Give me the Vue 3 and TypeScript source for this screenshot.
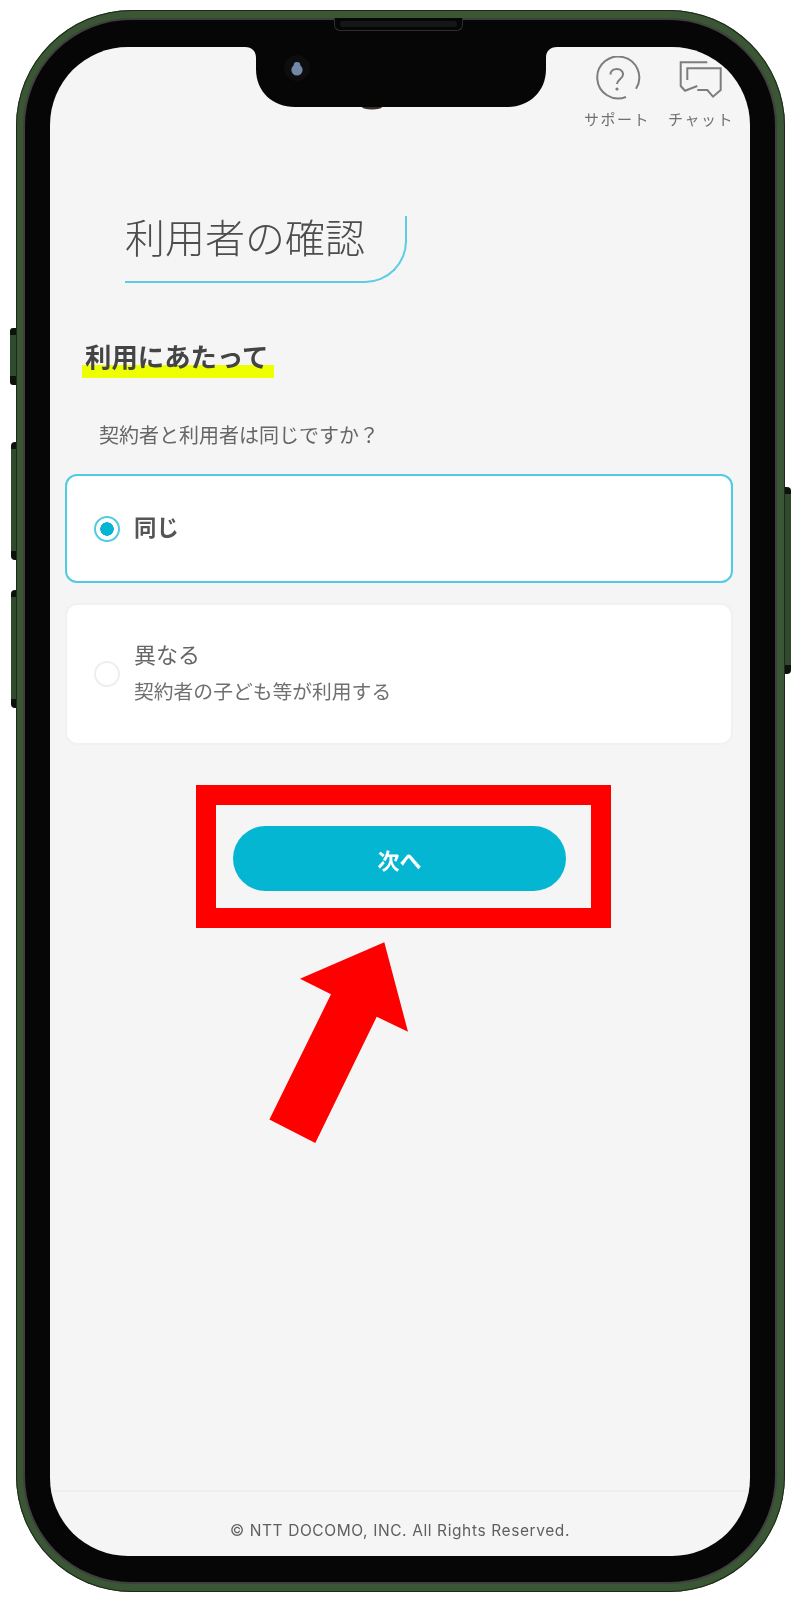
<script setup lang="ts">
const cjk = '"Noto Sans CJK JP", "Noto Sans", sans-serif'
const fontVars = { '--cjk': cjk }
</script>

<template>
  <div class="page" :style="fontVars">
    <div class="phone">
      <span class="key key-a"></span>
      <span class="key key-b"></span>
      <span class="key key-c"></span>
      <span class="key key-d"></span>
      <div class="bezel">
        <div class="speaker"><span class="grille"></span></div>
        <div class="screen">
          <svg class="notch" viewBox="0 0 312 63" width="312" height="63" aria-hidden="true">
            <ellipse cx="127" cy="60" rx="10" ry="2.4" fill="#3a2b28" />
            <path d="M0 0 C7 0 11 4 11 11 V22 C11 45 28 60 50 60 H262 C284 60 301 45 301 22 V11 C301 4 305 0 312 0 Z" fill="#060606" />
            <circle cx="52" cy="21" r="13" fill="#0d0d10" />
            <circle cx="52" cy="23" r="5.6" fill="#7189a6" />
            <circle cx="52" cy="18.5" r="3.4" fill="#7189a6" />
          </svg>

          <header class="topnav">
            <div class="navitem">
              <svg viewBox="0 0 64 46" width="64" height="46" class="navicon" aria-hidden="true">
                <path d="M41 41 A21 21 0 1 1 51 32.7" />
                <path d="M25.5 18.5 C25.5 11 38 11 38 18.5 C38 23 32 23.5 32 28" />
                <circle cx="32" cy="33" r="1.6" class="dot" />
              </svg>
              <span class="navlabel">サポート</span>
            </div>
            <div class="navitem">
              <svg viewBox="0 0 64 46" width="64" height="46" class="navicon" aria-hidden="true">
                <path d="M38.3 6.3 H11.7 V30 L16 34.7 L28.3 30" />
                <path d="M18.3 24 V12.3 H51.7 V34 L44 40.7 L38.3 34 H28.3" />
              </svg>
              <span class="navlabel">チャット</span>
            </div>
          </header>

          <main class="content">
            <h1 class="title"><span class="soft">利用者の確認</span></h1>
            <h2 class="heading"><span class="soft">利用にあたって</span></h2>
            <p class="question soft">契約者と利用者は同じですか？</p>

            <div class="card card-on">
              <span class="radio radio-on"></span>
              <span class="opt-on soft">同じ</span>
            </div>
            <div class="card card-off">
              <span class="radio"></span>
              <div class="opt-text soft">
                <span class="opt-main">異なる</span>
                <span class="opt-sub">契約者の子ども等が利用する</span>
              </div>
            </div>

            <div class="redbox">
              <button class="next" type="button"><span class="soft">次へ</span></button>
            </div>
          </main>

          <footer class="foot"><span class="soft">© NTT DOCOMO, INC. All Rights Reserved.</span></footer>
        </div>
      </div>
    </div>

    <svg class="arrow" viewBox="0 0 800 1600" width="800" height="1600" aria-hidden="true">
      <polygon points="384.3,942.3 408,1031.7 376.7,1016.7 315.3,1143 269.4,1119.6 331,994.3 300,978.7" fill="#ff0000" />
    </svg>
  </div>
</template>

<style>
html, body { margin: 0; background: #ffffff; }
</style>

<style scoped>
.page {
  position: relative;
  width: 800px;
  height: 1600px;
  overflow: hidden;
  background: #ffffff;
  padding: 10px 0 0 16px;
  box-sizing: border-box;
  font-family: var(--cjk);
}
.soft { filter: blur(0.45px); }
.phone {
  position: relative;
  width: 769px;
  height: 1582px;
  box-sizing: border-box;
  padding: 8px 8px 8px 7px;
  border-radius: 116px;
  background: #3a5634;
  box-shadow: inset 0 0 0 1px #1c2a19;
}
.key {
  position: absolute;
  width: 6px;
  background: linear-gradient(#0d130c 0 7px, #2f4a2c 7px calc(100% - 9px), #0d130c calc(100% - 9px));
}
.key-a { left: -6px; top: 318px; height: 57px; border-radius: 3px 0 0 3px; }
.key-b { left: -5px; top: 432px; height: 118px; width: 5px; border-radius: 4px 0 0 4px; }
.key-c { left: -5px; top: 580px; height: 118px; width: 5px; border-radius: 4px 0 0 4px; }
.key-d { right: -6px; top: 477px; height: 187px; border-radius: 0 4px 4px 0; }
.bezel {
  position: relative;
  height: 100%;
  box-sizing: border-box;
  padding: 27px 25px 26px 25px;
  border: 2px solid #3f3f3f;
  border-radius: 108px;
  background: #060606;
}
.speaker {
  position: absolute;
  left: 309px;
  top: -2px;
  width: 129px;
  height: 13px;
  box-sizing: border-box;
  padding: 3px 5px 0;
  background: #060606;
  border: 1px solid #2e2e2e;
  border-top: 0;
  border-radius: 0 0 6px 6px;
}
.grille {
  display: block;
  height: 6px;
  border-radius: 3px;
  background: #161616;
}
.screen {
  position: relative;
  display: flex;
  flex-direction: column;
  height: 100%;
  overflow: hidden;
  border-radius: 78px;
  background: #f5f5f5;
}
.notch {
  position: absolute;
  left: 195px;
  top: 0;
}
.topnav {
  display: flex;
  justify-content: flex-end;
  gap: 20px;
  padding: 9px 17px 0 0;
  height: 74px;
}
.navitem {
  display: flex;
  flex-direction: column;
  align-items: center;
  width: 64px;
  color: #707070;
  font-size: 15px;
  line-height: 22px;
  letter-spacing: 1.5px;
  white-space: nowrap;
}
.navlabel { filter: blur(0.45px); }
.navicon {
  margin-bottom: 6px;
  flex: none;
  fill: none;
  stroke: #7d7d7d;
  stroke-width: 2;
  filter: blur(0.35px);
}
.navicon .dot { fill: #7d7d7d; stroke: none; }
.content {
  display: flex;
  flex-direction: column;
  align-items: flex-start;
  flex: 1;
}
.title {
  box-sizing: border-box;
  width: 282px;
  height: 67px;
  margin: 86px 0 0 75px;
  border-right: 2px solid #5ccde2;
  border-bottom: 2px solid #5ccde2;
  border-bottom-right-radius: 42px;
  color: #4d4d4d;
  font-size: 40px;
  font-weight: 300;
  line-height: 40px;
  white-space: nowrap;
}
.heading {
  margin: 58px 0 0 32px;
  padding: 0 6px 0 3px;
  height: 37px;
  color: #444444;
  font-size: 26.4px;
  font-weight: 700;
  line-height: 29px;
  white-space: nowrap;
  background: linear-gradient(transparent 24px, #eeff00 24px);
}
.question {
  margin: 42px 0 0 49px;
  color: #666666;
  font-size: 20px;
  line-height: 30px;
}
.card {
  box-sizing: border-box;
  display: flex;
  align-items: center;
  width: 668px;
  margin-left: 15px;
  padding-left: 27px;
  gap: 14px;
  background: #ffffff;
  border-radius: 12px;
}
.card-on {
  height: 109px;
  margin-top: 24px;
  border: 2px solid #4fcbe2;
}
.card-off {
  height: 142px;
  margin-top: 20px;
  border: 2px solid #f1f1ee;
}
.radio {
  flex: none;
  box-sizing: border-box;
  width: 26px;
  height: 26px;
  border: 2px solid #eeeeee;
  border-radius: 50%;
}
.radio-on {
  border-color: #4fcbe2;
  background: radial-gradient(circle, #04b6d2 0 6.5px, #ffffff 7px);
}
.opt-on {
  color: #555555;
  font-size: 22.4px;
  font-weight: 700;
  line-height: 30px;
  padding-bottom: 5px;
}
.opt-text {
  display: flex;
  flex-direction: column;
  gap: 7px;
  padding-bottom: 5px;
  color: #666666;
}
.opt-main { font-size: 22px; line-height: 32px; }
.opt-sub { font-size: 19.8px; line-height: 30px; color: #707070; }
.redbox {
  box-sizing: border-box;
  display: flex;
  width: 415px;
  height: 143px;
  margin: 40px 0 0 146px;
  padding: 21px 25px 0 17px;
  border: 20px solid #ff0000;
}
.next {
  width: 333px;
  height: 65px;
  padding: 0;
  border: 0;
  border-radius: 33px;
  background: #04b6d2;
  color: #ffffff;
  font-family: var(--cjk);
  font-size: 22px;
  font-weight: 700;
}
.next .soft { display: inline-block; }
.foot {
  flex: none;
  height: 66px;
  box-sizing: border-box;
  padding-top: 27px;
  border-top: 2px solid #eeeeee;
  color: #5f5f5f;
  font-family: Inter, "Liberation Sans", sans-serif;
  font-size: 15.5px;
  line-height: 24px;
  letter-spacing: 0.6px;
  text-align: center;
}
.foot .soft, .title .soft, .heading .soft { display: inline-block; }
.arrow {
  position: absolute;
  left: 0;
  top: 0;
  pointer-events: none;
}
</style>
